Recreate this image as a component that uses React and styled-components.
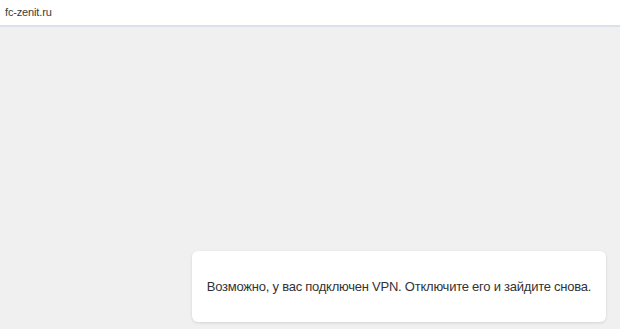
import React from "react";
import styled, { createGlobalStyle } from "styled-components";

const GlobalStyle = createGlobalStyle`
  html, body {
    margin: 0;
    padding: 0;
    height: 100%;
    background: #f0f0f0;
    font-family: "Liberation Sans", Arial, sans-serif;
  }
  #root {
    height: 100%;
  }
`;

const Page = styled.div`
  display: flex;
  flex-direction: column;
  height: 100%;
  background: #f0f0f0;
`;

const AddressBar = styled.div`
  height: 27px;
  flex-shrink: 0;
  display: flex;
  align-items: center;
  padding: 0 5px 2px;
  box-sizing: border-box;
  background: #fff;
  border-bottom: 2px solid #d9e1ea;
  font-size: 11px;
  letter-spacing: -0.15px;
  color: #3a3a3a;
`;

const Body = styled.div`
  flex: 1;
  display: flex;
  align-items: flex-end;
  justify-content: flex-end;
  padding: 0 14px 7px 0;
`;

const Notice = styled.div`
  width: 414px;
  height: 71px;
  box-sizing: border-box;
  display: flex;
  align-items: center;
  justify-content: center;
  background: #fff;
  border-radius: 6px;
  box-shadow: 0 1px 3px rgba(0, 0, 0, 0.12);
  font-size: 13px;
  letter-spacing: -0.24px;
  color: #333;
`;

export default function App() {
  return (
    <>
      <GlobalStyle />
      <Page>
        <AddressBar>fc-zenit.ru</AddressBar>
        <Body>
          <Notice>
            Возможно, у вас подключен VPN. Отключите его и зайдите снова.
          </Notice>
        </Body>
      </Page>
    </>
  );
}
